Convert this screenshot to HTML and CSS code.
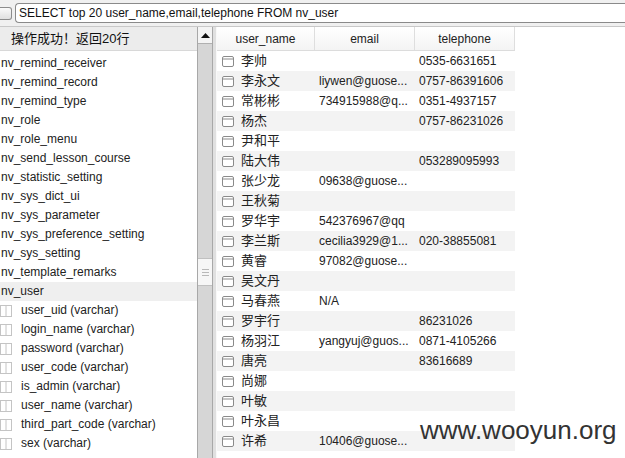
FILE: index.html
```html
<!DOCTYPE html>
<html>
<head>
<meta charset="utf-8">
<link rel="stylesheet" href="styles.css">
</head>
<body>
<div class="topbar">
  <div class="stubbtn"></div>
  <div class="sqlbox">SELECT top 20 user_name,email,telephone FROM nv_user</div>
</div>
<div class="main">
  <div class="leftpane">
    <div class="leftcol">
      <div class="lefthead">操作成功！返回20行</div>
      <div class="tree">
        <div class="titem">nv_remind_receiver</div>
        <div class="titem">nv_remind_record</div>
        <div class="titem">nv_remind_type</div>
        <div class="titem">nv_role</div>
        <div class="titem">nv_role_menu</div>
        <div class="titem">nv_send_lesson_course</div>
        <div class="titem">nv_statistic_setting</div>
        <div class="titem">nv_sys_dict_ui</div>
        <div class="titem">nv_sys_parameter</div>
        <div class="titem">nv_sys_preference_setting</div>
        <div class="titem">nv_sys_setting</div>
        <div class="titem">nv_template_remarks</div>
        <div class="titem sel">nv_user</div>
        <div class="titem col"><svg class="colicon" width="12" height="12" viewBox="0 0 12 12"><rect x="0.5" y="0.5" width="11" height="11" fill="#fff" stroke="#c4c4c4"/><line x1="6" y1="1" x2="6" y2="11" stroke="#c4c4c4"/></svg><span>user_uid (varchar)</span></div>
        <div class="titem col"><svg class="colicon" width="12" height="12" viewBox="0 0 12 12"><rect x="0.5" y="0.5" width="11" height="11" fill="#fff" stroke="#c4c4c4"/><line x1="6" y1="1" x2="6" y2="11" stroke="#c4c4c4"/></svg><span>login_name (varchar)</span></div>
        <div class="titem col"><svg class="colicon" width="12" height="12" viewBox="0 0 12 12"><rect x="0.5" y="0.5" width="11" height="11" fill="#fff" stroke="#c4c4c4"/><line x1="6" y1="1" x2="6" y2="11" stroke="#c4c4c4"/></svg><span>password (varchar)</span></div>
        <div class="titem col"><svg class="colicon" width="12" height="12" viewBox="0 0 12 12"><rect x="0.5" y="0.5" width="11" height="11" fill="#fff" stroke="#c4c4c4"/><line x1="6" y1="1" x2="6" y2="11" stroke="#c4c4c4"/></svg><span>user_code (varchar)</span></div>
        <div class="titem col"><svg class="colicon" width="12" height="12" viewBox="0 0 12 12"><rect x="0.5" y="0.5" width="11" height="11" fill="#fff" stroke="#c4c4c4"/><line x1="6" y1="1" x2="6" y2="11" stroke="#c4c4c4"/></svg><span>is_admin (varchar)</span></div>
        <div class="titem col"><svg class="colicon" width="12" height="12" viewBox="0 0 12 12"><rect x="0.5" y="0.5" width="11" height="11" fill="#fff" stroke="#c4c4c4"/><line x1="6" y1="1" x2="6" y2="11" stroke="#c4c4c4"/></svg><span>user_name (varchar)</span></div>
        <div class="titem col"><svg class="colicon" width="12" height="12" viewBox="0 0 12 12"><rect x="0.5" y="0.5" width="11" height="11" fill="#fff" stroke="#c4c4c4"/><line x1="6" y1="1" x2="6" y2="11" stroke="#c4c4c4"/></svg><span>third_part_code (varchar)</span></div>
        <div class="titem col"><svg class="colicon" width="12" height="12" viewBox="0 0 12 12"><rect x="0.5" y="0.5" width="11" height="11" fill="#fff" stroke="#c4c4c4"/><line x1="6" y1="1" x2="6" y2="11" stroke="#c4c4c4"/></svg><span>sex (varchar)</span></div>
      </div>
    </div>
    <div class="vscroll">
      <div class="sbtn"><svg width="9" height="5" viewBox="0 0 9 5"><path d="M0 5 L4.5 0 L9 5 Z" fill="#111"/></svg></div>
      <div class="strack">
        <div class="sthumb"><span></span><span></span><span></span></div>
      </div>
    </div>
  </div>
  <div class="splitter"></div>
  <div class="rightpane">
    <div class="grid">
      <div class="hrow">
        <div class="hc">user_name</div>
        <div class="hc">email</div>
        <div class="hc">telephone</div>
      </div>
      <div class="rows" id="rows"></div>
    </div>
    <div class="watermark">www.wooyun.org</div>
  </div>
</div>
<script>
var data = [
  ["李帅","","0535-6631651"],
  ["李永文","liywen@guose...","0757-86391606"],
  ["常彬彬","734915988@q...","0351-4937157"],
  ["杨杰","","0757-86231026"],
  ["尹和平","",""],
  ["陆大伟","","053289095993"],
  ["张少龙","09638@guose...",""],
  ["王秋菊","",""],
  ["罗华宇","542376967@qq",""],
  ["李兰斯","cecilia3929@1...","020-38855081"],
  ["黄睿","97082@guose...",""],
  ["吴文丹","",""],
  ["马春燕","N/A",""],
  ["罗宇行","","86231026"],
  ["杨羽江","yangyuj@guos...","0871-4105266"],
  ["唐亮","","83616689"],
  ["尚娜","",""],
  ["叶敏","",""],
  ["叶永昌","",""],
  ["许希","10406@guose...",""]
];
var icon = '<svg class="ricon" width="12" height="11" viewBox="0 0 12 11"><rect x="0.5" y="0.5" width="11" height="10" rx="1.5" fill="#fff" stroke="#8a8a8a"/><line x1="1" y1="3" x2="11" y2="3" stroke="#8a8a8a"/></svg>';
var html = "";
data.forEach(function(r){
  html += '<div class="row"><div class="c c1">' + icon + '<span>' + r[0] + '</span></div><div class="c c2">' + r[1] + '</div><div class="c c3">' + r[2] + '</div></div>';
});
document.getElementById("rows").innerHTML = html;
</script>
</body>
</html>
```

FILE: styles.css
```css
* { box-sizing: border-box; }
html, body { margin: 0; padding: 0; }
body {
  width: 625px;
  height: 458px;
  overflow: hidden;
  background: #fff;
  font-family: "Liberation Sans", "Noto Sans CJK SC", sans-serif;
  font-size: 12px;
  color: #222;
}
.topbar {
  height: 27px;
  background: #f0f0f0;
  display: flex;
  align-items: center;
  gap: 3px;
  border-bottom: 1px solid #c8c8c8;
}
.stubbtn {
  width: 12px;
  height: 13px;
  border: 1px solid #8c8c8c;
  border-left: none;
  border-radius: 0 3px 3px 0;
  background: linear-gradient(#fafafa, #e0e0e0);
}
.sqlbox {
  flex: 1;
  height: 20px;
  border: 1px solid #8a8a8a;
  border-right: none;
  border-radius: 4px 0 0 4px;
  background: #fff;
  padding: 0 0 0 3px;
  line-height: 18px;
  font-size: 12px;
  color: #111;
}
.main {
  display: flex;
  height: 431px;
}
.leftpane {
  width: 213px;
  display: flex;
}
.leftcol {
  width: 197px;
  display: flex;
  flex-direction: column;
}
.lefthead {
  height: 24px;
  background: #ececec;
  border-bottom: 1px solid #d8d8d8;
  padding-left: 11px;
  line-height: 23px;
  font-size: 13px;
  color: #111;
}
.tree {
  padding-top: 3px;
}
.titem {
  height: 19px;
  line-height: 19px;
  padding-left: 1px;
  white-space: nowrap;
  color: #222;
}
.titem.sel { background: #efefef; }
.titem.col {
  display: flex;
  align-items: center;
  gap: 9px;
  padding-left: 0;
}
.colicon { flex: none; }
.vscroll {
  width: 16px;
  display: flex;
  flex-direction: column;
  border-left: 1px solid #a8a8a8;
  border-right: 1px solid #a8a8a8;
  background: #d6d6d6;
}
.sbtn {
  height: 17px;
  background: #f4f4f4;
  border-bottom: 1px solid #b0b0b0;
  display: flex;
  align-items: center;
  justify-content: center;
}
.strack {
  flex: 1;
  padding-top: 214px;
}
.sthumb {
  height: 28px;
  background: #f6f6f6;
  border-top: 1px solid #c0c0c0;
  border-bottom: 1px solid #c0c0c0;
  display: flex;
  flex-direction: column;
  align-items: center;
  justify-content: center;
  gap: 2px;
}
.sthumb span {
  width: 7px;
  height: 1px;
  background: #b8b8b8;
}
.splitter {
  width: 4px;
  background: #e0e0e0;
  border-right: 1px solid #f8f8f8;
}
.rightpane {
  flex: 1;
  position: relative;
}
.grid { width: 298px; }
.hrow {
  display: flex;
  height: 24px;
  border-bottom: 1px solid #dcdcdc;
  background: linear-gradient(#ffffff, #f4f4f4);
}
.hc {
  width: 100px;
  text-align: center;
  line-height: 24px;
  color: #222;
  border-right: 1px solid #dedede;
}
.hc:first-child { width: 98px; }
.row {
  display: flex;
  height: 20px;
  line-height: 20px;
}
.row:nth-child(even) { background: #f3f3f3; }
.c { white-space: nowrap; overflow: hidden; }
.c1 {
  width: 98px;
  display: flex;
  align-items: center;
  gap: 7px;
  padding-left: 5px;
  font-size: 13px;
}
.ricon { flex: none; }
.c2 { width: 100px; padding-left: 4px; }
.c3 { width: 100px; padding-left: 4px; }
.watermark {
  position: absolute;
  left: 203px;
  top: 388px;
  font-size: 26px;
  color: #333;
}
```
